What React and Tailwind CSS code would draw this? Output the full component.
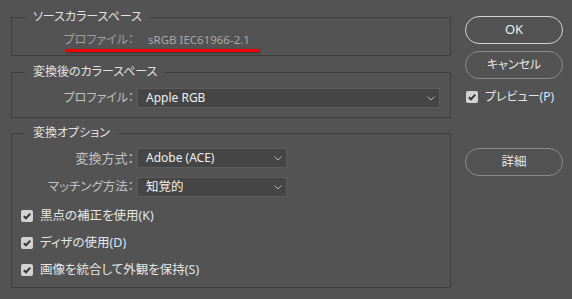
import React from "react";

const FONT = {
  fontFamily: '"Noto Sans", "Noto Sans CJK JP", sans-serif',
};

function Chevron() {
  return (
    <svg width="8" height="5" viewBox="0 0 8 5" className="shrink-0">
      <path d="M0.5 0.5 L4 4 L7.5 0.5" fill="none" stroke="#b5b5b5" strokeWidth="1" />
    </svg>
  );
}

function Check() {
  return (
    <span className="flex h-[12px] w-[12px] shrink-0 items-center justify-center rounded-[2px] bg-[#d2d2d2]">
      <svg width="10" height="10" viewBox="0 0 10 10">
        <path d="M1.8 5.2 L4 7.3 L8.3 2.6" fill="none" stroke="#383838" strokeWidth="2" />
      </svg>
    </span>
  );
}

function Select({ value, width, size = "text-[12px]" }) {
  return (
    <div
      className={`flex h-[20px] items-center justify-between border border-[#5c5c5c] bg-[#454545] pl-[8px] pr-[4px] text-[#f0f0f0] ${size} ${width}`}
    >
      <span className="leading-none">{value}</span>
      <Chevron />
    </div>
  );
}

function Label({ children, size = "text-[12px]" }) {
  return (
    <span className={`w-[122px] shrink-0 text-right leading-none text-[#c2c2c2] ${size}`}>
      {children}
    </span>
  );
}

function CheckRow({ text, key2 }) {
  return (
    <div className="flex h-[20px] items-center gap-[7px] pl-[9px]">
      <Check />
      <span className="text-[12.5px] leading-none text-[#e6e6e6]">
        {text}
        <span className="text-[#d8e6f8]">({key2})</span>
      </span>
    </div>
  );
}

function Legend({ children }) {
  return (
    <legend className="ml-[13px] px-[8px] text-[12px] leading-[14px] text-[#e2e2e2]">
      {children}
    </legend>
  );
}

export default function App() {
  return (
    <div
      className="flex h-[299px] w-[572px] bg-[#535353] [font-feature-settings:'palt']"
      style={FONT}
    >
      <div className="flex flex-col pl-[11px] pt-[10px]">
        <fieldset className="w-[440px] border border-[#3e3e3e] px-0 pb-[5px] pt-[6px]">
          <Legend>ソースカラースペース</Legend>
          <div className="relative flex h-[20px] items-center">
            <span className="w-[122px] shrink-0 text-right text-[12px] leading-none text-[#9e9e9e]">
              プロファイル：
            </span>
            <span className="ml-[14px] text-[11.5px] leading-none text-[#a9a9a9]">
              sRGB IEC61966-2.1
            </span>
            <div className="absolute left-[54px] top-[19px] h-[3px] w-[194px] bg-[#f00000] shadow-[0_1px_2px_rgba(0,0,0,0.35)]" />
          </div>
        </fieldset>

        <fieldset className="mt-[9px] w-[440px] border border-[#3e3e3e] pb-[9px] pt-[9px]">
          <Legend>変換後のカラースペース</Legend>
          <div className="flex h-[20px] items-center">
            <Label>プロファイル：</Label>
            <div className="ml-[3px]">
              <Select value="Apple RGB" width="w-[303px]" />
            </div>
          </div>
        </fieldset>

        <fieldset className="mt-[8px] w-[440px] border border-[#3e3e3e] pb-[7px] pt-[8px]">
          <Legend>変換オプション</Legend>
          <div className="flex flex-col">
            <div className="flex h-[20px] items-center">
              <Label size="text-[13px]">変換方式：</Label>
              <div className="ml-[3px]">
                <Select value="Adobe (ACE)" width="w-[150px]" />
              </div>
            </div>
            <div className="mt-[9px] flex h-[20px] items-center">
              <Label size="text-[12.5px]">マッチング方法：</Label>
              <div className="ml-[3px]">
                <Select value="知覚的" width="w-[150px]" size="text-[12.5px]" />
              </div>
            </div>
            <div className="mt-[9px] flex flex-col gap-[7px]">
              <CheckRow text="黒点の補正を使用" key2="K" />
              <CheckRow text="ディザの使用" key2="D" />
              <CheckRow text="画像を統合して外観を保持" key2="S" />
            </div>
          </div>
        </fieldset>
      </div>

      <div className="ml-[14px] flex w-[98px] flex-col pt-[16px]">
        <button className="flex h-[28px] items-center justify-center rounded-full border-[1.5px] border-[#d2d2d2] text-[13px] text-[#ececec]">
          OK
        </button>
        <button className="mt-[7px] flex h-[28px] items-center justify-center rounded-full border border-[#8a8a8a] text-[12px] text-[#e6e6e6]">
          キャンセル
        </button>
        <div className="mt-[8px] flex h-[20px] items-center gap-[7px] pl-[1px]">
          <Check />
          <span className="text-[12px] leading-none text-[#e6e6e6]">
            プレビュー<span className="text-[#d8e6f8]">(P)</span>
          </span>
        </div>
        <button className="mt-[41px] flex h-[28px] items-center justify-center rounded-full border border-[#8a8a8a] text-[12.5px] text-[#e6e6e6]">
          詳細
        </button>
      </div>
    </div>
  );
}
